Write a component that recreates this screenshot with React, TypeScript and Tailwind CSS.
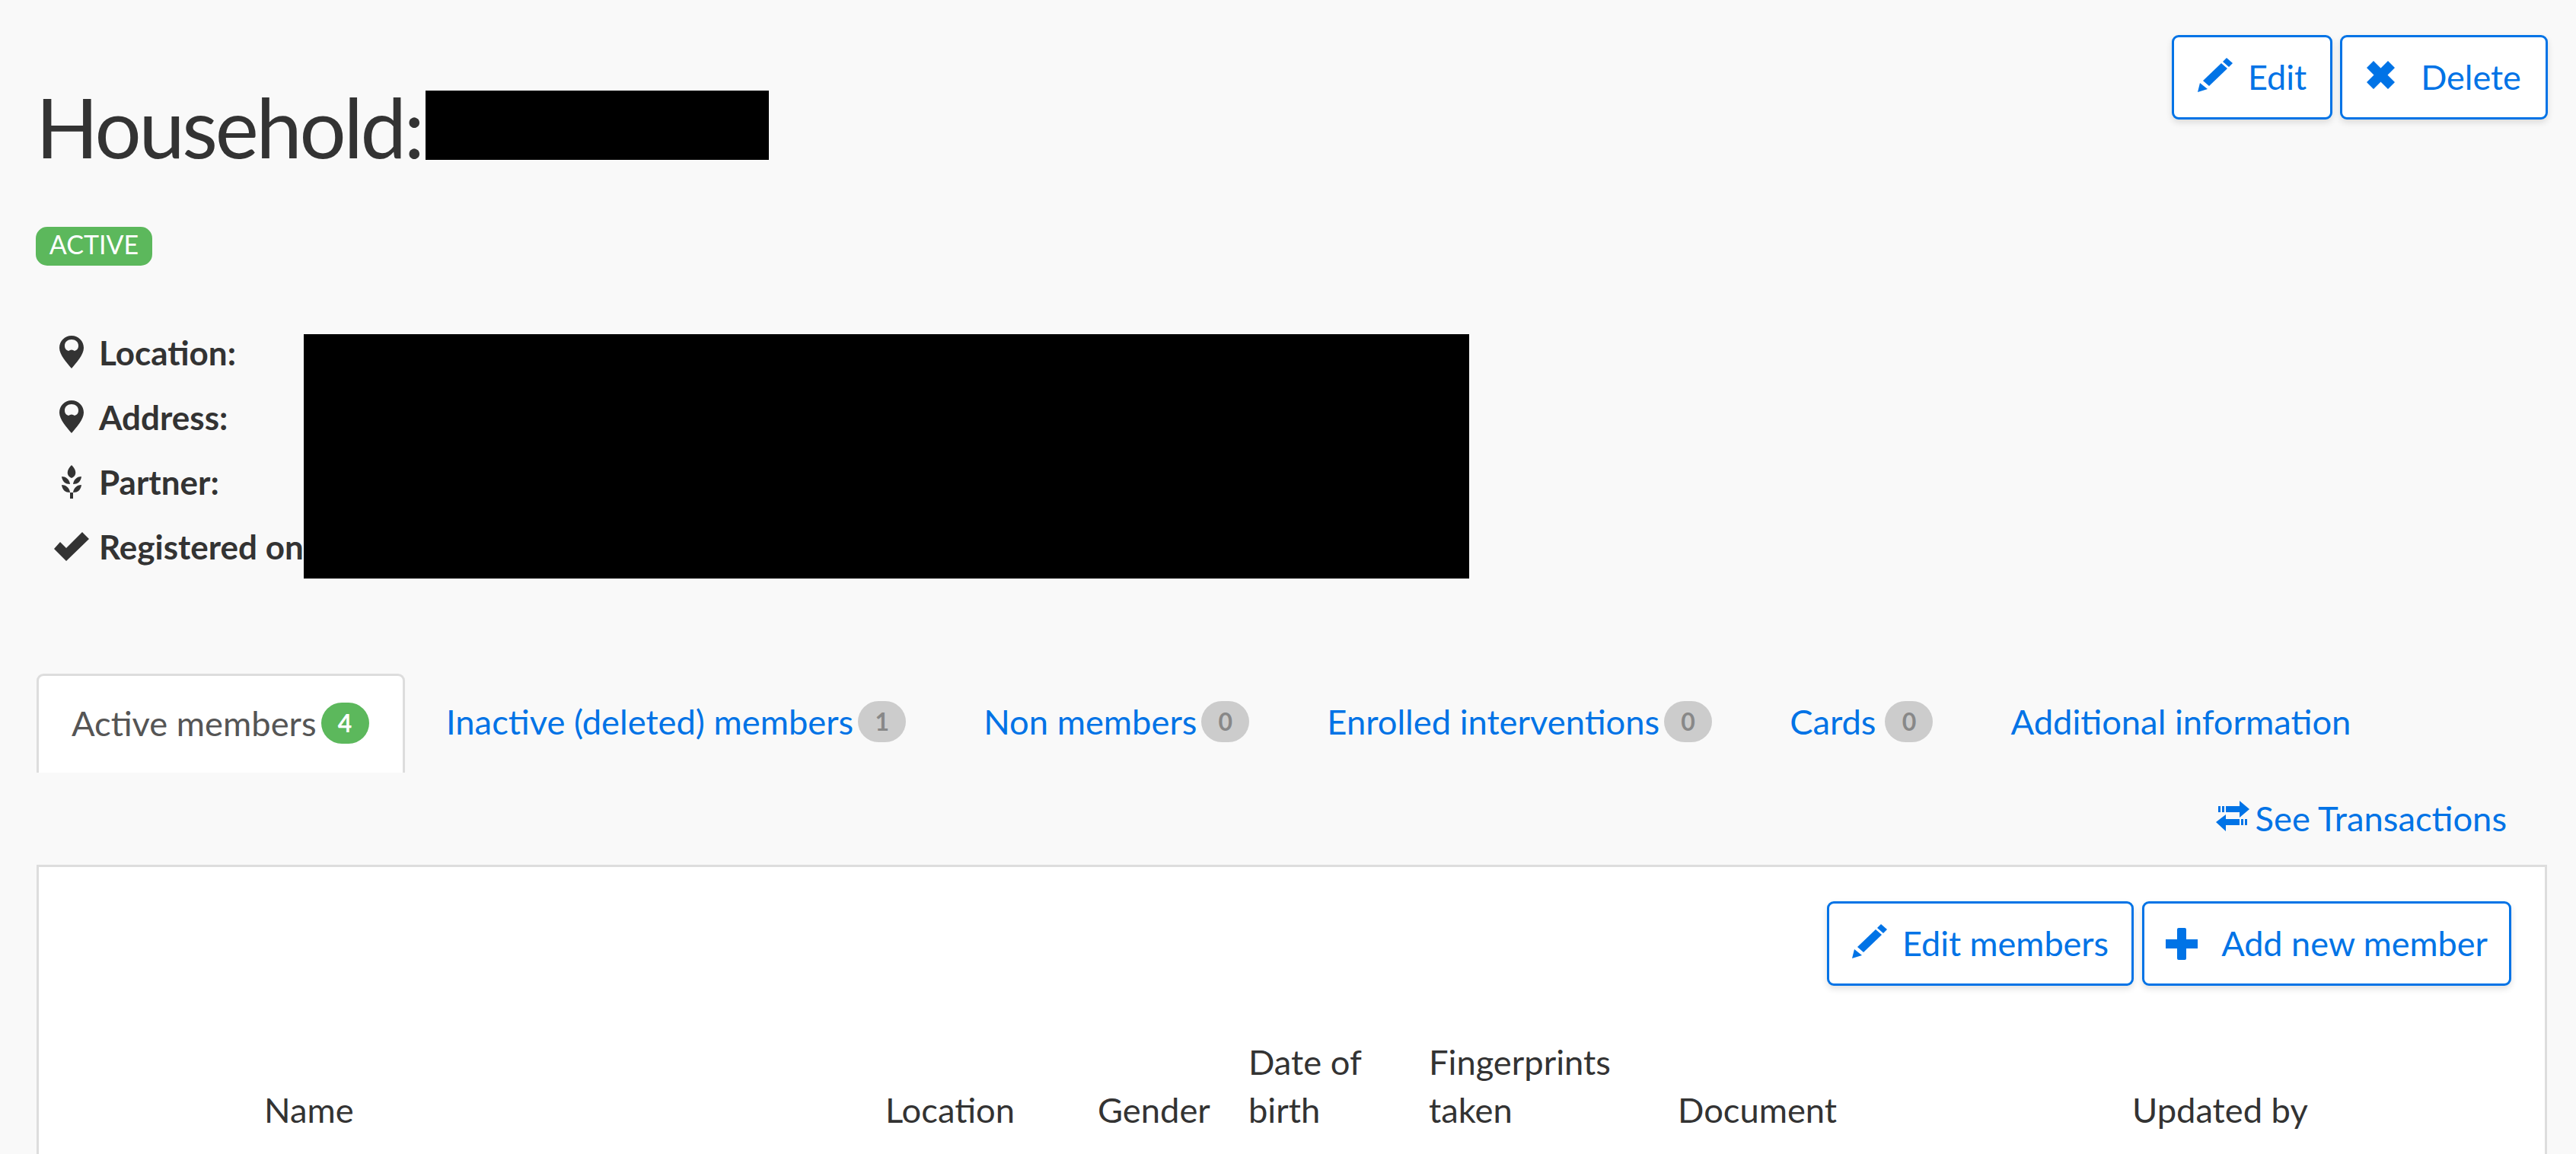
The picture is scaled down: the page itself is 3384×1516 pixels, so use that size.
import React from 'react';

const PencilIcon = ({ className }: { className: string }) => (
  <svg viewBox="0 0 46 45" className={className} fill="currentColor">
    <path d="M0 45 L3 33 L13 41 Z" />
    <path d="M7 30 L31 7 L39 14 L15 37 Z" />
    <path d="M38 0 L46 7 L41 12 L33 5 Z" />
  </svg>
);

const CrossIcon = ({ className }: { className: string }) => (
  <svg viewBox="0 0 37 37" className={className} fill="currentColor">
    <path d="M9 0 L18.5 9.5 L28 0 L37 9 L27.5 18.5 L37 28 L28 37 L18.5 27.5 L9 37 L0 28 L9.5 18.5 L0 9 Z" />
  </svg>
);

const PlusIcon = ({ className }: { className: string }) => (
  <svg viewBox="0 0 42 42" className={className} fill="currentColor">
    <path d="M15 2 Q15 0 17 0 L25 0 Q27 0 27 2 L27 15 L42 15 L42 27 L27 27 L27 40 Q27 42 25 42 L17 42 Q15 42 15 40 L15 27 L0 27 L0 15 L15 15 Z" />
  </svg>
);

const MarkerIcon = () => (
  <svg viewBox="0 0 32 43" className="w-[32px] h-[43px] text-[#333]" fill="currentColor">
    <path fillRule="evenodd" d="M16 0 C25 0 32 7 32 16 C32 25 22 36 16 43 C10 36 0 25 0 16 C0 7 7 0 16 0 Z M16 5 C11 5 7 8 7 13 C7 17 9 19 12 20 Q16 17 20 20 C23 19 25 17 25 13 C25 8 21 5 16 5 Z" />
  </svg>
);

const GrainIcon = () => (
  <svg viewBox="0 0 28 44" className="w-[28px] h-[44px] text-[#333]" fill="currentColor">
    <path d="M14 0 C18 4 20 8 19 12 C18 15 16 16 14 17 C12 16 10 15 9 12 C8 8 10 4 14 0 Z" />
    <path d="M1 15 C6 15 11 18 12 25 C6 25 2 22 1 15 Z" />
    <path d="M27 15 C22 15 17 18 16 25 C22 25 26 22 27 15 Z" />
    <path d="M1 26 C6 26 11 29 12 36 C6 36 2 33 1 26 Z" />
    <path d="M27 26 C22 26 17 29 16 36 C22 36 26 33 27 26 Z" />
    <path d="M12 36 L16 36 L16 44 L12 44 Z" />
  </svg>
);

const CheckIcon = () => (
  <svg viewBox="0 0 46 38" className="w-[46px] h-[38px] text-[#333]" fill="currentColor">
    <path d="M0 22 L8 13 L16 21 L37 0 L46 9 L16 38 Z" />
  </svg>
);

const TransferIcon = () => (
  <svg viewBox="0 0 44 40" className="w-[44px] h-[40px] mb-[6px]" fill="currentColor">
    <path d="M3 7 L6 7 L6 15 L3 15 Z M8 7 L11 7 L11 15 L8 15 Z M13 7 L31 7 L31 0 L44 11 L31 22 L31 15 L13 15 Z" />
    <path d="M41 24 L38 24 L38 32 L41 32 Z M36 24 L33 24 L33 32 L36 32 Z M31 24 L13 24 L13 18 L0 28 L13 40 L13 32 L31 32 Z" />
  </svg>
);

const ActionButton = ({
  className,
  gap,
  icon,
  label,
}: {
  className: string;
  gap: string;
  icon: React.ReactNode;
  label: string;
}) => (
  <button className={`flex items-center justify-center h-[111px] bg-white border-[3px] border-[#0073e6] rounded-[9px] text-[#0073e6] text-[45px] shadow-[0_4px_8px_rgba(0,0,0,0.12)] ${gap} ${className}`}>
    {icon}
    <span>{label}</span>
  </button>
);

const infoRows = [
  { label: 'Location:', icon: <MarkerIcon /> },
  { label: 'Address:', icon: <MarkerIcon /> },
  { label: 'Partner:', icon: <GrainIcon /> },
  { label: 'Registered on:', icon: <CheckIcon /> },
];

const tabs = [
  { label: 'Inactive (deleted) members', count: 1, gap: 'gap-[6px]' },
  { label: 'Non members', count: 0, gap: 'gap-[6px]' },
  { label: 'Enrolled interventions', count: 0, gap: 'gap-[6px]' },
  { label: 'Cards', count: 0, gap: 'gap-[12px]' },
];

const App = () => {
  return (
    <div className="h-[1516px] overflow-hidden bg-[#f9f9f9] text-[#333] text-[45.3px] font-['Lato',sans-serif]">
      <div className="flex justify-between pl-[47px] pr-[37px] pt-[46px]">
        <div className="flex items-center h-[91px] mt-[73px]">
          <h1 className="text-[108px] leading-[91px] font-normal tracking-[-3.3px] pt-[4px]">Household:</h1>
          <div className="w-[451px] h-[91px] bg-black ml-[4px]" />
        </div>
        <div className="flex gap-[10px] h-[111px]">
          <ActionButton className="w-[211px]" gap="gap-[20px]" icon={<PencilIcon className="w-[46px] h-[45px] mb-[6px]" />} label="Edit" />
          <ActionButton className="w-[273px]" gap="gap-[34px]" icon={<CrossIcon className="w-[37px] h-[37px] mb-[6px]" />} label="Delete" />
        </div>
      </div>

      <div className="ml-[47px] mt-[88px] w-[153px] h-[51px] rounded-[15px] bg-[#5cb85c] text-white text-[34px] leading-[46px] text-center">
        ACTIVE
      </div>

      <div className="flex mt-[71px] pl-[63px]">
        <div className="w-[336px] text-[44px] font-bold whitespace-nowrap">
          {infoRows.map((row) => (
            <div key={row.label} className="flex items-center h-[85px]">
              <div className="w-[62px] mr-[5px] flex justify-center shrink-0">{row.icon}</div>
              {row.label}
            </div>
          ))}
        </div>
        <div className="w-[1531px] h-[321px] mt-[19px] bg-black relative" />
      </div>

      <div className="flex items-start mt-[125px] pl-[48px] h-[130px]">
        <div className="flex items-center gap-[6px] h-[130px] w-[484px] pl-[43px] pb-[4px] bg-white border-[3px] border-b-0 border-[#ddd] rounded-t-[9px] text-[#555]">
          Active members
          <span className="flex items-center justify-center w-[63px] h-[54px] rounded-full bg-[#5cb85c] text-white text-[32px] font-bold">4</span>
        </div>
        <div className="flex items-center h-[130px] pb-[4px] text-[#0073e6] ml-[54px] gap-[102px]">
          {tabs.map((tab) => (
            <div key={tab.label} className={`flex items-center whitespace-nowrap ${tab.gap}`}>
              {tab.label}
              <span className="flex items-center justify-center w-[63px] h-[54px] rounded-full bg-[#ccc] text-[#888] text-[32px] font-bold">{tab.count}</span>
            </div>
          ))}
          <div className="whitespace-nowrap">Additional information</div>
        </div>
      </div>

      <div className="flex justify-end items-center gap-[8px] h-[121px] pb-[2px] pr-[91px] text-[#0073e6]">
        <TransferIcon />
        See Transactions
      </div>

      <div className="ml-[48px] mr-[38px] h-[500px] bg-white border-[3px] border-[#ddd]">
        <div className="flex justify-end gap-[11px] mt-[45px] pr-[44px]">
          <ActionButton className="w-[403px]" gap="gap-[20px]" icon={<PencilIcon className="w-[46px] h-[45px] mb-[6px]" />} label="Edit members" />
          <ActionButton className="w-[485px]" gap="gap-[31px]" icon={<PlusIcon className="w-[42px] h-[42px]" />} label="Add new member" />
        </div>
        <div className="grid grid-cols-[816px_279px_198px_237px_327px_597px_1fr] items-end mt-[68px] pl-[296px] leading-[63px]">
          <div>Name</div>
          <div>Location</div>
          <div>Gender</div>
          <div>Date of<br />birth</div>
          <div>Fingerprints<br />taken</div>
          <div>Document</div>
          <div>Updated by</div>
        </div>
      </div>
    </div>
  );
};

export default App;
